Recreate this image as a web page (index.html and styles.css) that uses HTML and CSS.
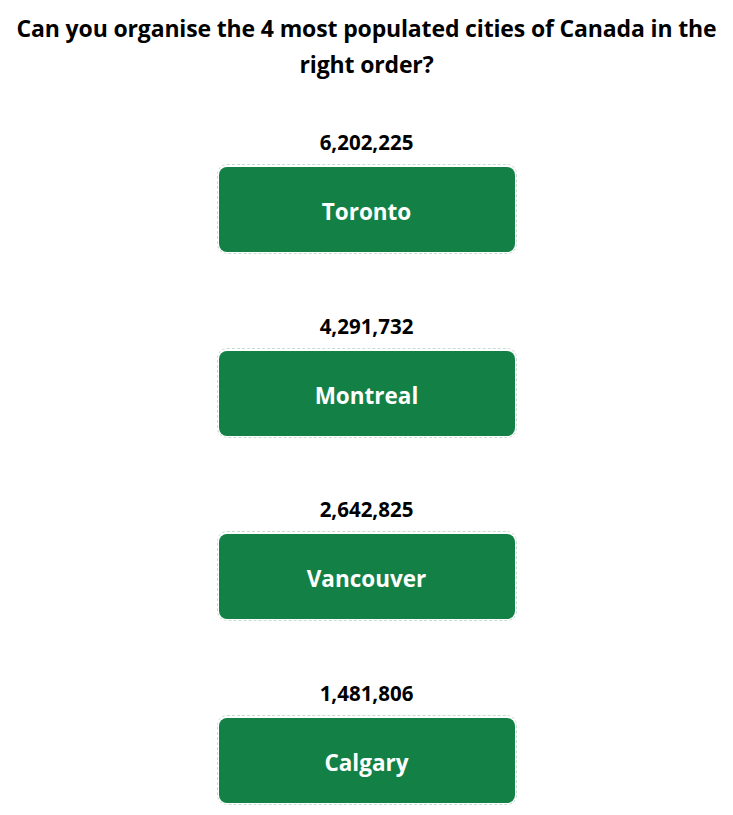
FILE: index.html
```html
<!DOCTYPE html>
<html>
<head>
<meta charset="utf-8">
<link rel="stylesheet" href="styles.css">
</head>
<body>
<main class="quiz">
  <h1 class="question">Can you organise the 4 most populated cities of Canada in the right order?</h1>
  <ol class="list">
    <li class="item">
      <div class="count">6,202,225</div>
      <div class="slot"><div class="city">Toronto</div></div>
    </li>
    <li class="item">
      <div class="count">4,291,732</div>
      <div class="slot"><div class="city">Montreal</div></div>
    </li>
    <li class="item">
      <div class="count">2,642,825</div>
      <div class="slot"><div class="city">Vancouver</div></div>
    </li>
    <li class="item">
      <div class="count">1,481,806</div>
      <div class="slot"><div class="city">Calgary</div></div>
    </li>
  </ol>
</main>
</body>
</html>
```
FILE: styles.css
```css
html, body {
  margin: 0;
  padding: 0;
  background: #ffffff;
}
body {
  font-family: "Open Sans", "Noto Sans", sans-serif;
  color: #000;
}
.quiz {
  display: flex;
  flex-direction: column;
  align-items: center;
  padding: 10px 8px 0;
}
.question {
  margin: 0;
  font-size: 23px;
  line-height: 36px;
  font-weight: 700;
  text-align: center;
  max-width: 712px;
  letter-spacing: -0.15px;
}
.list {
  list-style: none;
  margin: 48px 0 0;
  padding: 0;
  display: flex;
  flex-direction: column;
  align-items: center;
  gap: 59.5px;
}
.item {
  display: flex;
  flex-direction: column;
  align-items: center;
}
.count {
  font-size: 20.5px;
  line-height: 24px;
  font-weight: 700;
  margin-bottom: 10px;
}
.slot {
  width: 296px;
  padding: 2px 1px 1px;
  border: 1px dashed #c9dcd1;
  border-radius: 10px;
}
.city {
  box-sizing: border-box;
  height: 85px;
  padding-top: 4px;
  display: flex;
  align-items: center;
  justify-content: center;
  background: #138146;
  border-radius: 8px;
  color: #fff;
  font-size: 22.5px;
  font-weight: 700;
}
```
